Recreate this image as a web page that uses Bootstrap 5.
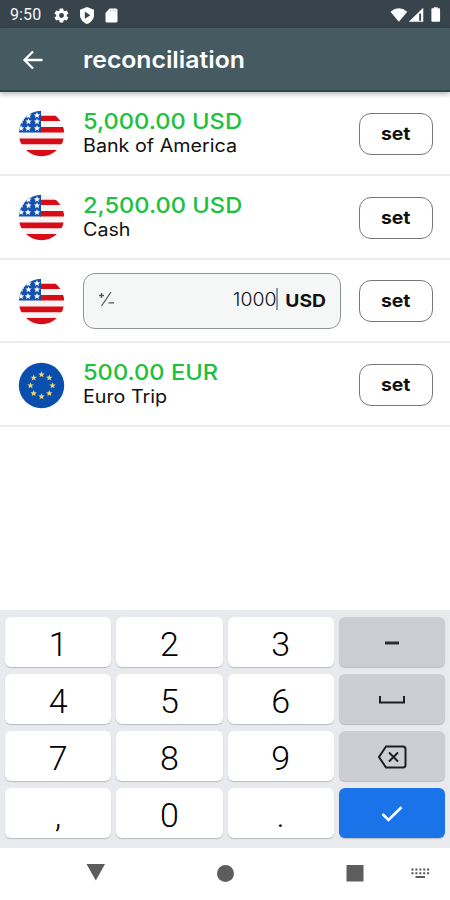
<!DOCTYPE html>
<html lang="en">
<head>
<meta charset="utf-8">
<meta name="viewport" content="width=device-width, initial-scale=1">
<title>reconciliation</title>
<link rel="stylesheet" href="https://cdn.jsdelivr.net/npm/bootstrap@5.3.0/dist/css/bootstrap.min.css">
<style>
body{font-family:Inter,"Open Sans",sans-serif;color:#111;background:#fff;overflow:hidden}
.screen{width:450px;height:900px}
.statusbar{height:28px;background:#37444c;font-family:Roboto,sans-serif;font-size:16px;color:#f4f6f7;padding:2px 8px 0 10px}
.clock{width:43px;letter-spacing:.1px}
.appbar{height:64px;background:#465a62;border-bottom:2px solid #2f4750;box-shadow:0 2px 5px rgba(0,0,0,.3);padding:2px 0 0 21px}
.wide{transform:scaleX(1.075);transform-origin:left center}
.apptitle{font-size:23px;font-weight:600;margin-left:38px;line-height:28px}
.accounts{height:518px}
.acct{height:83.8px;border-bottom:2px solid #ececec;padding:2px 17px 0 18px}
.flag{width:47px;height:47px;margin-right:18px}
.amount{font-size:22px;font-weight:500;color:#1cc13c;line-height:24px}
.acctname{font-size:18px;line-height:25px;padding-bottom:1px;transform:scaleX(1.095)}
.setbtn{width:74px;height:42px;border:1.4px solid #777;border-radius:12px;font-size:18px;font-weight:700;padding:0 0 1px;color:#111;background:#fff}
.setbtn span{display:inline-block;transform:scaleX(1.08)}
.entry{width:258px;height:56px;border:1.5px solid #919494;border-radius:12px;background:#f5f6f6;padding:0 14px 4px 15px}
.typed{font-size:18px;font-weight:350;transform:scaleX(1.08);transform-origin:right center}
.caret{width:2px;height:22px;background:#8a9aa3}
.unit{font-size:18px;font-weight:700;margin-left:10px;padding-top:2px;transform:scaleX(1.07);transform-origin:right center}
.keypad{height:238px;background:#e8eaed;padding:7px 5px;display:grid;grid-template-columns:repeat(4,1fr);grid-auto-rows:50px;gap:7px 5px}
.keycap{background:#fff;border-radius:6px;box-shadow:0 1px 1px #b9bcc0;font-family:Roboto,sans-serif;font-size:34px;font-weight:350;line-height:50px;color:#000;padding-top:2px}
.keyfn{background:#cdced4;padding:2px 0 0}
.keygo{background:#1a73e8;padding:2px 0 0}
.sysnav{height:52px;background:#fff}
svg{display:block;flex:none}
</style>
<script src="https://cdn.jsdelivr.net/npm/bootstrap@5.3.0/dist/js/bootstrap.bundle.min.js"></script>
</head>
<body>
<svg width="0" height="0" class="position-absolute">
<defs>
<clipPath id="disc"><circle cx="23.5" cy="23.5" r="22.7"/></clipPath>
<path id="star" d="M0-3.2.9-1 3.2-.9 1.4.6 2 2.8 0 1.5-2 2.8-1.4.6-3.2-.9-.9-1z"/>
<symbol id="us" viewBox="0 0 47 47">
<g clip-path="url(#disc)">
<path fill="#f6f4f5" d="M0 0h47v47H0z"/>
<path fill="#d80c16" d="M22 5.8h25v5.2H22zM22 17h25v5.4H22zM0 28.5h47v5.8H0zM0 40h47v7H0z"/>
<path fill="#1450ae" d="M0 0h23v22.4H0z"/>
<g fill="#fff"><use href="#star" x="19" y="5.3"/><use href="#star" x="10.5" y="5.5"/><use href="#star" x="10.5" y="11.5"/><use href="#star" x="19" y="11.5"/><use href="#star" x="10" y="18.3"/><use href="#star" x="19" y="18.3"/><use href="#star" x="3" y="18.3"/><use href="#star" x="3" y="11"/></g>
</g>
</symbol>
</defs>
</svg>
<div class="screen d-flex flex-column">
<div class="statusbar d-flex align-items-center">
<span class="clock">9:50</span>
<svg width="17" height="17" viewBox="0 0 24 24" fill="#fff"><path fill-rule="evenodd" d="M19.4 13c0-.3.1-.6.1-1s0-.7-.1-1l2.1-1.600c.2-.2.3-.5.1-.7l-2-3.400c-.1-.2-.4-.3-.6-.2l-2.500 1a7 7 0 0 0-1.700-1l-.4-2.600c0-.3-.2-.5-.5-.5h-4c-.3 0-.5.2-.5.5L9 5.100a7 7 0 0 0-1.700 1l-2.500-1c-.2-.1-.5 0-.6.2l-2 3.400c-.1.2-.1.5.1.7L4.500 11a8 8 0 0 0 0 2l-2.200 1.600c-.2.2-.3.5-.1.7l2 3.400c.1.2.4.3.6.2l2.500-1a7 7 0 0 0 1.700 1l.4 2.600c0 .3.2.5.5.5h4c.3 0 .5-.2.5-.5l.4-2.600a7 7 0 0 0 1.700-1l2.500 1c.2.1.5 0 .6-.2l2-3.400c.1-.2.1-.5-.1-.7zM12 15.500a3.500 3.500 0 1 1 0-7 3.500 3.500 0 0 1 0 7z"/></svg>
<svg class="ms-2" width="18" height="19" viewBox="0 0 18 19"><path fill="#fff" d="M9 1l7 2.700v5.300c0 4.300-3 7.600-7 9-4-1.400-7-4.700-7-9V3.700z"/><path fill="#37444c" d="M6.800 5.600l5.500 3.600-5.500 3.600z"/></svg>
<svg class="ms-2" width="15" height="17" viewBox="0 0 15 17"><path fill="#fff" d="M5.500 1.500H12q1.500 0 1.500 1.500v11q0 1.500-1.500 1.500H3Q1.500 15.500 1.500 14V6z"/><path stroke="#9aa2a7" stroke-width=".8" d="M6.500 2.800v1.500M9 2.800v1.500M11.300 2.800v1.500"/></svg>
<svg class="ms-auto" width="52" height="18" viewBox="0 0 54 18" fill="#fff"><path d="M.5 5.500Q9-1.500 18 5.500L9.200 16z"/><path d="M34.500 1.500V16H19.500z"/><path d="M30.300 7.500h2V15h-2z" fill="#37444c"/><path d="M43.500 2h2V1h4v1h1.500q1 0 1 1v12q0 1-1 1h-7q-1 0-1-1V3q0-1 .5-1z"/></svg>
</div>
<header class="appbar d-flex align-items-center text-white position-relative">
<svg width="24" height="24" viewBox="0 0 24 24" fill="none" stroke="#fff" stroke-width="2.300"><path d="M21.500 12H4M12 3.500L3.500 12l8.500 8.500"/></svg>
<div class="apptitle wide">reconciliation</div>
</header>
<main class="accounts">
<div class="acct d-flex align-items-center"><svg class="flag"><use href="#us"/></svg><div><div class="amount wide">5,000.00 USD</div><div class="acctname wide">Bank of America</div></div><button class="btn setbtn ms-auto"><span>set</span></button></div>
<div class="acct d-flex align-items-center"><svg class="flag"><use href="#us"/></svg><div><div class="amount wide">2,500.00 USD</div><div class="acctname wide">Cash</div></div><button class="btn setbtn ms-auto"><span>set</span></button></div>
<div class="acct d-flex align-items-center"><svg class="flag"><use href="#us"/></svg>
<div class="entry d-flex align-items-center">
<svg width="15" height="16" viewBox="0 0 15 16" fill="none" stroke="#555" stroke-width="1.300"><path d="M0 4.500h5M2.500 2v5M12 1L2.500 15M9.500 11.800H15"/></svg>
<span class="typed ms-auto">1000</span><span class="caret"></span><span class="unit">USD</span></div>
<button class="btn setbtn ms-auto"><span>set</span></button></div>
<div class="acct d-flex align-items-center"><svg class="flag" viewBox="0 0 47 47"><circle cx="23.500" cy="23.500" r="22.700" fill="#0b4fae"/><g fill="#f3d66b"><use href="#star" x="23.500" y="12.500"/><use href="#star" x="31.300" y="15.700"/><use href="#star" x="34.500" y="23.500"/><use href="#star" x="31.300" y="31.300"/><use href="#star" x="23.500" y="34.500"/><use href="#star" x="15.700" y="31.300"/><use href="#star" x="12.500" y="23.500"/><use href="#star" x="15.700" y="15.700"/></g></svg><div><div class="amount wide">500.00 EUR</div><div class="acctname wide">Euro Trip</div></div><button class="btn setbtn ms-auto"><span>set</span></button></div>
</main>
<div class="keypad">
<div class="keycap text-center">1</div><div class="keycap text-center">2</div><div class="keycap text-center">3</div>
<div class="keycap keyfn d-flex align-items-center justify-content-center"><svg width="14" height="4"><path fill="#2c2d30" d="M0 .5h14v3H0z"/></svg></div>
<div class="keycap text-center">4</div><div class="keycap text-center">5</div><div class="keycap text-center">6</div>
<div class="keycap keyfn d-flex align-items-center justify-content-center"><svg width="26" height="8" fill="none" stroke="#1d1e20" stroke-width="2"><path d="M1 0v6.500h24V0"/></svg></div>
<div class="keycap text-center">7</div><div class="keycap text-center">8</div><div class="keycap text-center">9</div>
<div class="keycap keyfn d-flex align-items-center justify-content-center"><svg width="30" height="24" viewBox="0 0 30 24" fill="none" stroke="#1d1e20" stroke-width="2"><path d="M9 1.500h17q2.500 0 2.500 2.500v16q0 2.500-2.500 2.500H9L2 12zM12 7.500l9 9M21 7.500l-9 9"/></svg></div>
<div class="keycap text-center">,</div><div class="keycap text-center">0</div><div class="keycap text-center">.</div>
<div class="keycap keygo d-flex align-items-center justify-content-center"><svg width="22" height="16" viewBox="0 0 22 16" fill="none" stroke="#fff" stroke-width="2.600"><path d="M1.500 8l6 6L20.500 1.200"/></svg></div>
</div>
<div class="sysnav d-flex align-items-center">
<svg width="450" height="52" fill="#5d5d5d"><path d="M86.500 16h18.500L95.800 32.500z"/><circle cx="225.500" cy="25.500" r="8.500"/><path d="M346.500 17h17v16.500h-17z"/><g stroke="#555" stroke-width="2" stroke-dasharray="2 1.900"><path d="M411.500 21.500h18M411.500 25.200h18"/></g><path d="M415.500 28h9.500v2h-9.500z"/></svg>
</div>
</div>
</body>
</html>
